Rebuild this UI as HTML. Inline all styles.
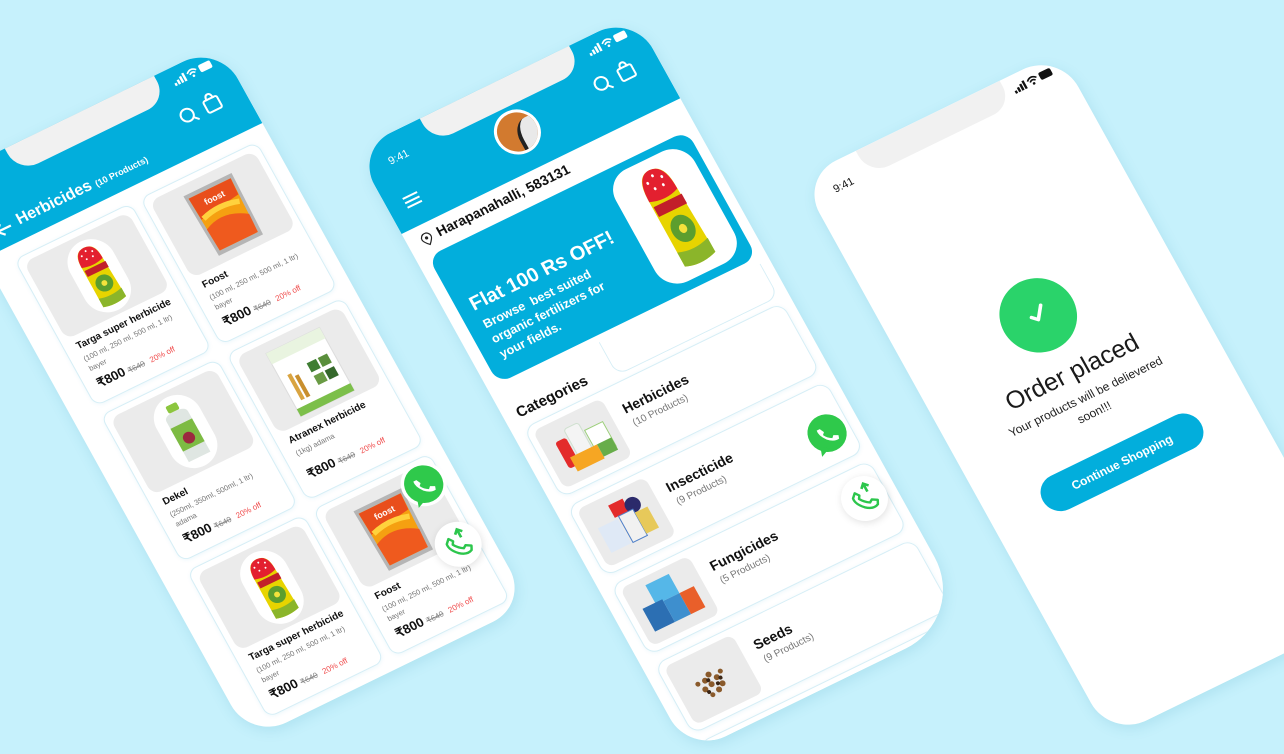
<!DOCTYPE html>
<html><head><meta charset="utf-8">
<style>
*{margin:0;padding:0;box-sizing:border-box}
html,body{width:1284px;height:743px;overflow:hidden;background:#c6f1fc;font-family:"Liberation Sans",sans-serif}
.ph{position:absolute;left:0;top:0;width:310px;background:#fff;border-radius:40px;overflow:hidden;transform-origin:0 0;box-shadow:0 4px 14px rgba(0,120,160,.12)}
.abs{position:absolute}
.hdr{position:absolute;left:0;top:0;width:310px;background:#02aedc}
.notch{position:absolute;left:72px;top:0;width:166px;height:28px;background:#f1f1f1;border-radius:0 0 22px 22px}
.time{position:absolute;left:24px;top:20px;font-size:11px;color:#fff}
.stat{position:absolute;left:252px;top:8px}
.card{position:absolute;width:130px;height:168px;border:1px solid #d6eef6;border-radius:10px;background:#fff;box-shadow:0 1px 4px rgba(0,150,200,.08)}
.card .img{position:absolute;left:6px;top:6px;width:116px;height:88px;background:#ebebeb;border-radius:10px}
.card .nm{position:absolute;left:12px;top:100px;font-size:10px;font-weight:bold;color:#111;white-space:nowrap}
.card .v{position:absolute;left:12px;font-size:7.5px;color:#777;white-space:nowrap}
.card .pr{position:absolute;left:12px;top:140px;white-space:nowrap;font-size:13px;font-weight:bold;color:#111}
.pr s{font-size:8px;color:#888;font-weight:normal;margin-left:3px}
.pr i{font-style:normal;font-size:8px;color:#f04c4c;font-weight:normal;margin-left:6px}
.pill{position:absolute;left:36px;top:6px;width:48px;height:78px;background:#fff;border-radius:24px}
.cat{position:absolute;left:12px;width:288px;height:80px;border:1px solid #d6eef6;border-radius:12px;background:#fff;box-shadow:0 1px 4px rgba(0,150,200,.08)}
.cat .im{position:absolute;left:6px;top:6px;width:76px;height:66px;background:#ebebeb;border-radius:8px}
.cat .t{position:absolute;left:96px;top:18px;font-size:14px;font-weight:bold;color:#111}
.cat .s{position:absolute;left:98px;top:38px;font-size:10px;color:#777}
.call{position:absolute;width:46px;height:46px;border-radius:50%;background:#fff;box-shadow:0 2px 8px rgba(0,0,0,.12)}
</style></head><body>

<svg width="0" height="0" style="position:absolute">
<defs>
<symbol id="stat" viewBox="0 0 44 12"><g fill="currentColor"><rect x="0" y="8" width="2.4" height="3"/><rect x="3.6" y="6" width="2.4" height="5"/><rect x="7.2" y="4" width="2.4" height="7"/><rect x="10.8" y="2" width="2.4" height="9"/></g><path d="M16 5 Q21 0 26 5 M18 7 Q21 4 24 7" stroke="currentColor" stroke-width="1.6" fill="none"/><circle cx="21" cy="9.5" r="1.3" fill="currentColor"/><rect x="29" y="2" width="13" height="8" rx="2" fill="currentColor"/></symbol>
<symbol id="targa" viewBox="0 0 40 70"><path d="M8 18 Q8 2 20 2 Q32 2 32 18 L34 66 Q20 70 8 66 Z" fill="#e7d400"/><path d="M8 20 Q8 2 20 2 Q32 2 32 20 Q20 24 8 20Z" fill="#e3202f"/><g fill="#fff"><circle cx="14" cy="9" r="1"/><circle cx="20" cy="6" r="1"/><circle cx="26" cy="9" r="1"/><circle cx="17" cy="14" r="1"/><circle cx="24" cy="14" r="1"/></g><rect x="9" y="24" width="24" height="7" fill="#c21f2a"/><circle cx="21" cy="44" r="9" fill="#5c9e2e"/><circle cx="21" cy="44" r="3" fill="#f4e23c"/><path d="M8 56 Q20 60 34 56 L34 66 Q20 70 8 66Z" fill="#8bb52a"/></symbol>
<symbol id="foost" viewBox="0 0 60 70"><path d="M6 4 L54 4 L52 66 L8 66 Z" fill="#b5b5b5"/><path d="M9 8 L51 8 L49 62 L11 62Z" fill="#f5a011"/><path d="M9 8 L51 8 L50 24 L10 30Z" fill="#e94e1b"/><path d="M10 40 Q30 30 50 44 L49 62 L11 62Z" fill="#ef5a1e"/><path d="M12 30 Q30 24 48 30" stroke="#ffd23d" stroke-width="5" fill="none"/><text x="20" y="20" font-size="8" fill="#fff" font-family="Liberation Sans" font-weight="bold">foost</text></symbol>
<symbol id="wa" viewBox="0 0 46 46"><circle cx="23" cy="21" r="20" fill="#fff"/><circle cx="23" cy="21" r="17" fill="#2fc94b"/><path d="M9 38 L12 29 L18 34Z" fill="#2fc94b"/><path d="M16 15 Q15 20 20 26 Q25 31 30 30 L31 27 L27 25 L25 27 Q21 25 19 21 L21 19 L19 15Z" fill="#fff"/></symbol>
<symbol id="call" viewBox="0 0 46 46"><path d="M13 18 Q12 24 19 31 Q26 37 32 34 L34 30 L29 27 L26 29 Q21 26 18 21 L20 18 L17 14 Z" fill="none" stroke="#2cc64c" stroke-width="2.4" stroke-linejoin="round"/><path d="M25 13 L29 9 L33 13 M29 9 L29 18" stroke="#2cc64c" stroke-width="2.6" fill="none"/></symbol>
</defs></svg>

<!-- PHONE 1 -->
<div class="ph" style="height:640px;transform:matrix(0.899,-0.438,0.485,0.875,-60,180)">
  <div class="hdr" style="height:90px"></div>
  <div class="notch"></div>
  <div class="time">9:41</div>
  <svg class="stat" width="44" height="12" style="color:#fff"><use href="#stat"/></svg>
  <svg class="abs" style="left:238px;top:38px" width="50" height="24"><circle cx="10" cy="12" r="6.5" stroke="#fff" stroke-width="2" fill="none"/><path d="M15 17 L19 21" stroke="#fff" stroke-width="2"/><rect x="30" y="7" width="15" height="13" rx="2" stroke="#fff" stroke-width="2" fill="none"/><path d="M34 8 Q34 2 37.5 2 Q41 2 41 8" stroke="#fff" stroke-width="2" fill="none"/></svg>
  <svg class="abs" style="left:22px;top:64px" width="20" height="16"><path d="M18 8 H3 M9 2 L3 8 L9 14" stroke="#fff" stroke-width="2.2" fill="none"/></svg>
  <div class="abs" style="left:48px;top:62px;color:#fff;font-weight:bold;font-size:16px;white-space:nowrap">Herbicides <span style="font-size:9px">(10 Products)</span></div>

  <div class="card" style="left:26px;top:104px"><div class="img"><div class="pill"><svg style="position:absolute;left:4px;top:5px" width="40" height="68"><use href="#targa"/></svg></div></div>
    <div class="nm">Targa super herbicide</div><div class="v" style="top:115px">(100 ml, 250 ml, 500 ml, 1 ltr)</div><div class="v" style="top:126px">bayer</div><div class="pr">₹800<s>₹640</s><i>20% off</i></div></div>
  <div class="card" style="left:166px;top:104px"><div class="img"><svg style="position:absolute;left:24px;top:6px" width="70" height="78"><use href="#foost"/></svg></div>
    <div class="nm">Foost</div><div class="v" style="top:115px">(100 ml, 250 ml, 500 ml, 1 ltr)</div><div class="v" style="top:126px">bayer</div><div class="pr">₹800<s>₹640</s><i>20% off</i></div></div>

  <div class="card" style="left:26px;top:282px"><div class="img"><div class="pill"><svg style="position:absolute;left:9px;top:8px" width="30" height="62" viewBox="0 0 30 62"><rect x="9" y="0" width="12" height="8" rx="2" fill="#8cc63f"/><path d="M3 14 Q3 8 15 8 Q27 8 27 14 L27 60 L3 60Z" fill="#dfe6e2"/><rect x="3" y="22" width="24" height="26" fill="#7dbb43"/><circle cx="15" cy="38" r="6" fill="#9b2a3f"/></svg></div></div>
    <div class="nm">Dekel</div><div class="v" style="top:115px">(250ml, 350ml, 500ml, 1 ltr)</div><div class="v" style="top:126px">adama</div><div class="pr">₹800<s>₹640</s><i>20% off</i></div></div>
  <div class="card" style="left:166px;top:282px"><div class="img"><svg style="position:absolute;left:26px;top:8px" width="64" height="76" viewBox="0 0 62 74"><rect x="2" y="2" width="58" height="70" fill="#fff" stroke="#ddd"/><rect x="2" y="2" width="58" height="12" fill="#e9f4e0"/><rect x="2" y="64" width="58" height="8" fill="#7cbf4a"/><rect x="10" y="30" width="4" height="28" fill="#d9a441"/><rect x="16" y="34" width="4" height="24" fill="#c98f2e"/><rect x="32" y="28" width="10" height="10" fill="#3f7d33"/><rect x="44" y="28" width="10" height="10" fill="#5a8f3c"/><rect x="32" y="42" width="10" height="10" fill="#6a9b45"/><rect x="44" y="42" width="10" height="10" fill="#35682b"/></svg></div>
    <div class="nm">Atranex herbicide</div><div class="v" style="top:115px">(1kg) adama</div><div class="pr" style="top:136px">₹800<s>₹640</s><i>20% off</i></div></div>

  <div class="card" style="left:26px;top:460px"><div class="img"><div class="pill"><svg style="position:absolute;left:4px;top:5px" width="40" height="68"><use href="#targa"/></svg></div></div>
    <div class="nm">Targa super herbicide</div><div class="v" style="top:115px">(100 ml, 250 ml, 500 ml, 1 ltr)</div><div class="v" style="top:126px">bayer</div><div class="pr">₹800<s>₹640</s><i>20% off</i></div></div>
  <div class="card" style="left:166px;top:460px"><div class="img"><svg style="position:absolute;left:20px;top:8px" width="70" height="78"><use href="#foost"/></svg></div>
    <div class="nm">Foost</div><div class="v" style="top:115px">(100 ml, 250 ml, 500 ml, 1 ltr)</div><div class="v" style="top:126px">bayer</div><div class="pr">₹800<s>₹640</s><i>20% off</i></div></div>

  <svg class="abs" style="left:250px;top:462px" width="52" height="52"><use href="#wa"/></svg>
  <div class="call" style="left:254px;top:532px"><svg width="46" height="46"><use href="#call"/></svg></div>
</div>

<!-- PHONE 2 -->
<div class="ph" style="height:690px;border-bottom-right-radius:70px;transform:matrix(0.899,-0.438,0.485,0.875,355,150)">
  <div class="hdr" style="height:96px"></div>
  <div class="notch"></div>
  <div class="time">9:41</div>
  <svg class="stat" width="44" height="12" style="color:#fff"><use href="#stat"/></svg>
  <svg class="abs" style="left:238px;top:36px" width="50" height="24"><circle cx="10" cy="12" r="6.5" stroke="#fff" stroke-width="2" fill="none"/><path d="M15 17 L19 21" stroke="#fff" stroke-width="2"/><rect x="30" y="7" width="15" height="13" rx="2" stroke="#fff" stroke-width="2" fill="none"/><path d="M34 8 Q34 2 37.5 2 Q41 2 41 8" stroke="#fff" stroke-width="2" fill="none"/></svg>
  <div class="abs" style="left:128px;top:32px;width:46px;height:46px;border-radius:50%;background:#d27a2f;border:3px solid #fff;overflow:hidden"><div style="position:absolute;left:18px;top:10px;width:30px;height:40px;background:#e9e9e9;border-radius:50% 0 0 0;border-left:4px solid #222"></div></div>
  <svg class="abs" style="left:16px;top:62px" width="20" height="16"><path d="M2 3 H18 M2 8 H18 M2 13 H18" stroke="#fff" stroke-width="2"/></svg>
  <svg class="abs" style="left:14px;top:105px" width="12" height="14"><path d="M6 13 Q1 8 1 5.5 A5 5 0 0 1 11 5.5 Q11 8 6 13Z" stroke="#222" stroke-width="1.2" fill="none"/><circle cx="6" cy="5.5" r="1.6" fill="#222"/></svg>
  <div class="abs" style="left:32px;top:102px;font-size:14px;font-weight:bold;color:#111;white-space:nowrap">Harapanahalli, 583131</div>

  <div class="abs" style="left:12px;top:128px;width:288px;height:145px;background:#02aedc;border-radius:14px">
    <div class="abs" style="left:192px;top:8px;width:88px;height:128px;background:#fff;border-radius:24px"><svg style="position:absolute;left:18px;top:8px" width="52" height="112" viewBox="0 0 40 70" preserveAspectRatio="none"><use href="#targa"/></svg></div>
    <div class="abs" style="left:14px;top:52px;color:#fff;font-weight:bold;font-size:20px;white-space:nowrap">Flat 100 Rs OFF!</div>
    <div class="abs" style="left:16px;top:78px;color:#fff;font-weight:bold;font-size:12.5px;line-height:17px;width:150px">Browse&nbsp; best suited organic fertilizers for your fields.</div>
  </div>
  <div class="abs" style="left:120px;top:280px;width:180px;height:38px;border:1px solid #d6eef6;border-top:none;border-radius:0 0 12px 12px"></div>
  <div class="abs" style="left:14px;top:300px;font-size:15px;font-weight:bold;color:#111">Categories</div>

  <div class="cat" style="top:324px"><div class="im"><svg width="76" height="66"><rect x="14" y="20" width="12" height="30" rx="3" fill="#e32b2b"/><rect x="28" y="12" width="16" height="40" rx="3" fill="#f4f4f4" stroke="#cfe0cf"/><rect x="46" y="22" width="20" height="28" fill="#fff" stroke="#9ccf7a"/><rect x="20" y="40" width="30" height="16" fill="#f6a623"/><rect x="50" y="40" width="16" height="14" fill="#67ad4a"/></svg></div><div class="t">Herbicides</div><div class="s">(10 Products)</div></div>
  <div class="cat" style="top:414px"><div class="im"><svg width="76" height="66"><rect x="30" y="10" width="16" height="14" fill="#e32b2b"/><circle cx="52" cy="20" r="8" fill="#2b2a6b"/><rect x="10" y="26" width="22" height="28" fill="#dfe9f6"/><rect x="34" y="24" width="16" height="30" fill="#f1f1f1" stroke="#4f80c9"/><rect x="50" y="28" width="14" height="24" fill="#e7c95a"/></svg></div><div class="t">Insecticide</div><div class="s">(9 Products)</div></div>
  <div class="cat" style="top:504px"><div class="im"><svg width="76" height="66"><rect x="24" y="8" width="26" height="22" fill="#55b7e8"/><rect x="10" y="28" width="22" height="26" fill="#2c6fb3"/><rect x="32" y="30" width="18" height="24" fill="#3e8fce"/><rect x="50" y="30" width="16" height="24" fill="#e95f2a"/></svg></div><div class="t">Fungicides</div><div class="s">(5 Products)</div></div>
  <div class="cat" style="top:594px"><div class="im"><svg width="76" height="66"><g fill="#8a5a2b"><circle cx="30" cy="30" r="3"/><circle cx="36" cy="26" r="3"/><circle cx="42" cy="32" r="3"/><circle cx="34" cy="36" r="3"/><circle cx="26" cy="38" r="3"/><circle cx="44" cy="40" r="3"/><circle cx="38" cy="44" r="3"/><circle cx="30" cy="46" r="2.5"/><circle cx="48" cy="28" r="2.5"/><circle cx="22" cy="30" r="2.5"/></g><g fill="#3b2616"><circle cx="33" cy="31" r="2"/><circle cx="40" cy="38" r="2"/><circle cx="28" cy="42" r="2"/><circle cx="45" cy="34" r="2"/></g></svg></div><div class="t">Seeds</div><div class="s">(9 Products)</div></div>
  <div class="cat" style="top:684px"></div>

  <svg class="abs" style="left:250px;top:438px" width="52" height="52"><use href="#wa"/></svg>
  <div class="call" style="left:254px;top:514px"><svg width="46" height="46"><use href="#call"/></svg></div>
</div>

<!-- PHONE 3 -->
<div class="ph" style="width:288px;height:640px;transform:matrix(0.899,-0.438,0.485,0.875,800,178)">
  <div class="notch" style="left:62px;width:160px"></div>
  <div class="time" style="color:#111">9:41</div>
  <svg class="stat" width="44" height="12" style="color:#111;left:230px"><use href="#stat"/></svg>
  <div class="abs" style="left:104px;top:190px;width:76px;height:76px;border-radius:50%;background:#2ad36a"></div>
  <svg class="abs" style="left:130px;top:214px" width="24" height="24"><path d="M5 13 L10 18 L19 6" stroke="#fff" stroke-width="3.5" fill="none" stroke-linecap="round" stroke-linejoin="round"/></svg>
  <div class="abs" style="left:0;top:280px;width:288px;text-align:center;font-size:25px;color:#1a1a1a">Order placed</div>
  <div class="abs" style="left:0;top:313px;width:288px;text-align:center;font-size:12px;line-height:18px;color:#222">Your products will be delievered<br>soon!!!</div>
  <div class="abs" style="left:56px;top:378px;width:176px;height:38px;border-radius:19px;background:#02aedc;color:#fff;font-weight:bold;font-size:12px;text-align:center;line-height:38px">Continue Shopping</div>
</div>

</body></html>
